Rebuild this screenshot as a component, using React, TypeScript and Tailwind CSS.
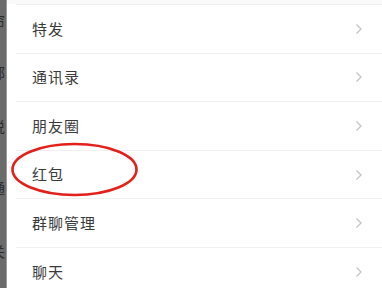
import React from "react";

const rows = ["特发", "通讯录", "朋友圈", "红包", "群聊管理", "聊天"];
const sideChars = [
  { c: "帘", top: 13 },
  { c: "部", top: 65 },
  { c: "说", top: 119 },
  { c: "通", top: 180 },
  { c: "关", top: 244 },
];

function Chevron() {
  return (
    <svg width="8" height="12" viewBox="0 0 8 12" className="shrink-0">
      <path d="M1.5 1.5 L6 6 L1.5 10.5" fill="none" stroke="#c4c4c4" strokeWidth="1.3" />
    </svg>
  );
}

export default function App() {
  return (
    <div
      className="relative flex w-[382px] h-[288px] overflow-hidden bg-white"
      style={{ fontFamily: '"Noto Sans CJK SC", "Noto Sans", sans-serif' }}
    >
      <div className="relative w-[7px] shrink-0 bg-[#6b6b6b] border-r border-[#9a9a9a] overflow-hidden">
        {sideChars.map((s) => (
          <span
            key={s.c}
            className="absolute left-[-9px] text-[14px] leading-[14px] text-[#2a2a2a]"
            style={{ top: s.top }}
          >
            {s.c}
          </span>
        ))}
      </div>
      <div className="flex-1 flex flex-col">
        <div className="h-[4px] shrink-0 bg-[#fafafa]" />
        {rows.map((r) => (
          <div
            key={r}
            className="h-[48.6px] shrink-0 flex items-center border-t border-[#f0f0f0] ml-[9px] pl-[16px] pr-[19px]"
          >
            <span className="flex-1 text-[15px] text-[#3a3a3a] tracking-[1px]">{r}</span>
            <Chevron />
          </div>
        ))}
      </div>
      <svg className="absolute left-0 top-0 pointer-events-none" width="382" height="288">
        <ellipse cx="74.5" cy="169.5" rx="62" ry="25.5" fill="none" stroke="#e3201b" strokeWidth="2.6" />
      </svg>
    </div>
  );
}
